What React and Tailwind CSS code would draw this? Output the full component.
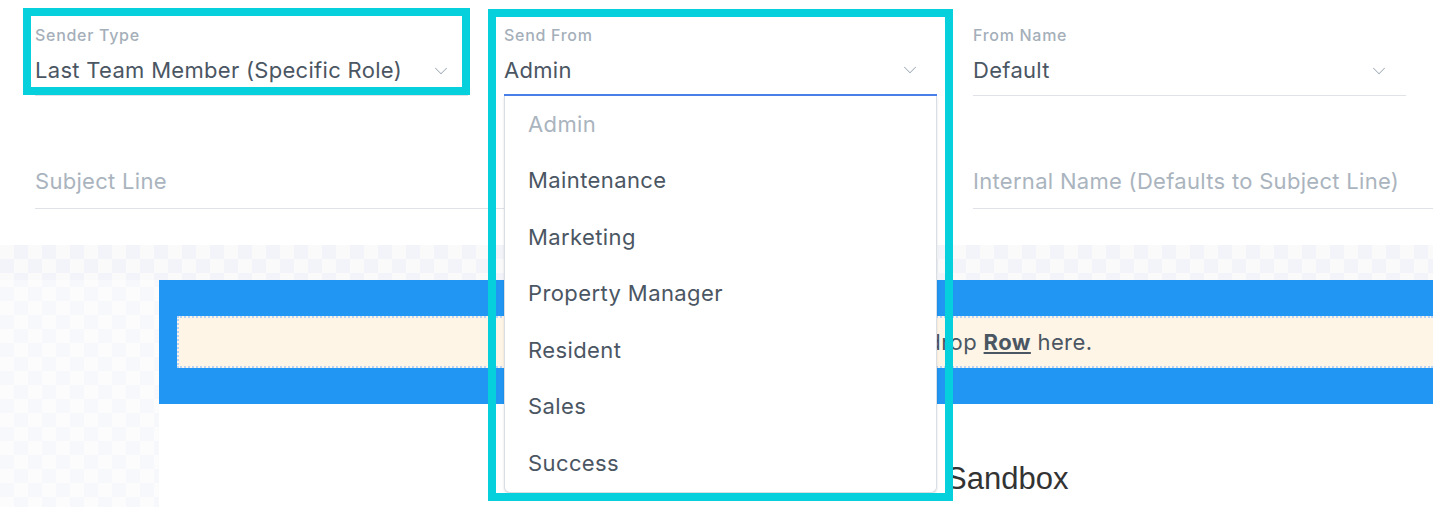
import React from "react";
import { FiChevronDown } from "react-icons/fi";

const font = { fontFamily: "Inter, 'Noto Sans', sans-serif" };

const SelectField = ({ label, value, active }) => (
  <div className="w-[433px]">
    <div className="h-[23px] pt-[16px] text-[16px] leading-[18px] font-medium tracking-[0.7px] text-[#a5afba]">
      {label}
    </div>
    <div
      className={`flex items-center justify-between h-[63px] pt-[19px] pb-[6px] ${
        active ? "border-b-2 border-[#4a80ec]" : "border-b border-[#dfe3e8]"
      }`}
    >
      <span className="text-[22px] tracking-[0.3px] text-[#4b5663]">{value}</span>
      <FiChevronDown size={22} strokeWidth={1.1} className="mr-[16px] text-[#a3aeb9]" />
    </div>
  </div>
);

const InputField = ({ placeholder, className }) => (
  <div className={`h-[48px] flex items-end pb-[10px] border-b border-[#dfe3e8] ${className}`}>
    <span className="text-[22px] tracking-[0.3px] text-[#aab4be]">{placeholder}</span>
  </div>
);

const options = [
  "Maintenance",
  "Marketing",
  "Property Manager",
  "Resident",
  "Sales",
  "Success",
];

export default function App() {
  return (
    <div
      className="relative w-[1433px] h-[507px] overflow-hidden bg-white"
      style={font}
    >
      {/* form fields */}
      <div className="pl-[35px]">
        <div className="flex gap-[36px] pt-[10px]">
          <SelectField label="Sender Type" value="Last Team Member (Specific Role)" />
          <SelectField label="Send From" value="Admin" active />
          <SelectField label="From Name" value="Default" />
        </div>
        <div className="flex gap-[36px] mt-[65px]">
          <InputField placeholder="Subject Line" className="w-[902px]" />
          <InputField placeholder="Internal Name (Defaults to Subject Line)" className="flex-1" />
        </div>
      </div>

      {/* email builder canvas */}
      <div className="mt-[36px] h-[300px] bg-[repeating-conic-gradient(#f2f4f9_0%_25%,#fafafa_0%_50%)] bg-[length:28px_28px]">
        <div className="h-[35px]" />
        <div className="flex h-full">
          <div className="w-[159px] bg-white/40" />
          <div className="flex-1 flex flex-col">
            <div className="h-[124px] bg-[#2196f3] pl-[18px] pt-[36px]">
              <div className="h-[52px] bg-[#fef5e6] border-2 border-dotted border-[#b9d3f5] border-r-0 flex items-center pl-[669px]">
                <span className="text-[22px] tracking-[0.4px] text-[#4b5663]">
                  Drag &amp; drop{" "}
                  <span className="font-bold underline underline-offset-2">Row</span>{" "}
                  here.
                </span>
              </div>
            </div>
            <div className="flex-1 bg-white pt-[52px] pl-[787px]">
              <span
                className="text-[31px] text-[#333]"
                style={{ fontFamily: "'Liberation Sans', Arial, sans-serif" }}
              >
                Sandbox
              </span>
            </div>
          </div>
        </div>
      </div>

      {/* open dropdown menu */}
      <div className="absolute left-[504px] top-[96px] w-[433px] bg-white border border-t-0 border-[#d9dee5] rounded-b-md shadow-sm">
        <div className="h-[56.5px] flex items-center pl-[23px] text-[22px] tracking-[0.4px] text-[#aab4be]">
          Admin
        </div>
        {options.map((o) => (
          <div key={o} className="h-[56.5px] flex items-center pl-[23px] text-[22px] tracking-[0.4px] text-[#4b5663]">
            {o}
          </div>
        ))}
      </div>

      {/* highlight outlines */}
      <div className="absolute left-[23px] top-[8px] w-[447px] h-[87px] border-[8px] border-[#05d0dc]" />
      <div className="absolute left-[488px] top-[9px] w-[465px] h-[492px] border-[8px] border-[#05d0dc]" />
    </div>
  );
}
